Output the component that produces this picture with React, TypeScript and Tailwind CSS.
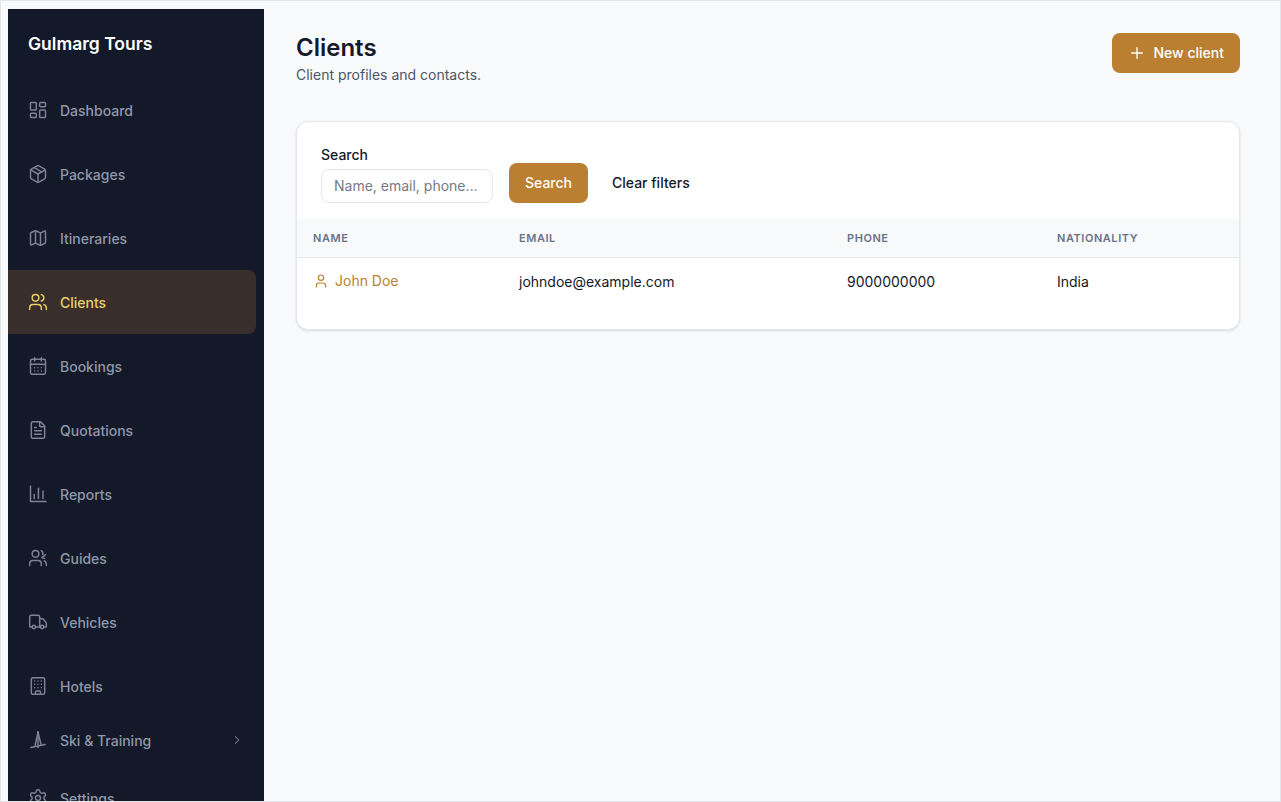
import {
  Building,
  CalendarDays,
  ChevronRight,
  LayoutDashboard,
  Map,
  Package,
  Plus,
  Settings,
  Truck,
  User,
  Users,
  FileText,
} from 'lucide-react'
import type { ComponentType } from 'react'

type IconProps = { className?: string; strokeWidth?: number }

interface NavItem {
  label: string
  icon: ComponentType<IconProps>
  active?: boolean
}

function ReportsIcon({ className, strokeWidth }: IconProps) {
  return (
    <svg viewBox="0 0 24 24" fill="none" stroke="currentColor" strokeWidth={strokeWidth} strokeLinecap="round" strokeLinejoin="round" className={className}>
      <path d="M3 2.5V21h18.5" />
      <path d="M7.5 17.5v-5" />
      <path d="M12.5 17.5V5" />
      <path d="M18 17.5V8.5" />
    </svg>
  )
}

function GuidesIcon({ className, strokeWidth }: IconProps) {
  return (
    <svg viewBox="0 0 24 24" fill="none" stroke="currentColor" strokeWidth={strokeWidth} strokeLinecap="round" strokeLinejoin="round" className={className}>
      <circle cx="9" cy="7" r="4" />
      <path d="M16 21v-2a4 4 0 0 0-4-4H6a4 4 0 0 0-4 4v2" />
      <path d="M16 3.1a4 4 0 0 1 1.6 4.6" />
      <path d="M21 8l-4.5 3.5 3.5 1" />
      <path d="M22 21v-2a4 4 0 0 0-2.5-3.7" />
    </svg>
  )
}

function SkiIcon({ className, strokeWidth }: IconProps) {
  return (
    <svg viewBox="0 0 24 24" fill="none" stroke="currentColor" strokeWidth={strokeWidth} strokeLinecap="round" strokeLinejoin="round" className={className}>
      <path d="M12 2.5L8.5 18.5" />
      <path d="M12 2.5l3.5 14.5" />
      <path d="M12 2.5V21" />
      <path d="M3.5 21l17-3.5" />
    </svg>
  )
}

const navItems: NavItem[] = [
  { label: 'Dashboard', icon: LayoutDashboard },
  { label: 'Packages', icon: Package },
  { label: 'Itineraries', icon: Map },
  { label: 'Clients', icon: Users, active: true },
  { label: 'Bookings', icon: CalendarDays },
  { label: 'Quotations', icon: FileText },
  { label: 'Reports', icon: ReportsIcon },
  { label: 'Guides', icon: GuidesIcon },
  { label: 'Vehicles', icon: Truck },
  { label: 'Hotels', icon: Building },
]

export default function App() {
  return (
    <div className="h-[802px] overflow-hidden border border-[#e2e4ea] bg-[#f9fafc] font-['Inter',sans-serif] text-[#14192a]">
      <div className="flex h-full pl-[7px] pt-2">
        {/* Sidebar */}
        <aside className="h-[820px] w-64 shrink-0 bg-[#131929]">
          <div className="px-5 pt-[25px] text-[17.5px] leading-5 font-semibold text-white">Gulmarg Tours</div>
          <nav className="mt-6 pr-2">
            {navItems.map((item) => {
              const Icon = item.icon
              return (
                <div
                  key={item.label}
                  className={
                    item.active
                      ? 'flex h-16 items-center gap-3 rounded-r-lg bg-[#382e2c] pl-5 text-sm font-medium text-[#e8cf66]'
                      : 'flex h-16 items-center gap-3 pl-5 text-sm font-medium text-[#9097a8]'
                  }
                >
                  <Icon className={item.active ? 'size-5 text-[#e8cf66]' : 'size-5 text-[#7c8395]'} strokeWidth={1.75} />
                  <span className="pt-0.5">{item.label}</span>
                </div>
              )
            })}
            <div className="flex h-11 items-center gap-3 pl-5 text-sm font-medium text-[#9097a8]">
              <SkiIcon className="size-5 text-[#7c8395]" strokeWidth={1.75} />
              <span className="flex-1 pt-0.5">Ski &amp; Training</span>
              <ChevronRight className="mr-3 size-3.5 text-[#7c8395]" strokeWidth={1.75} />
            </div>
            <div className="mt-1 flex h-16 items-center gap-3 pl-5 text-sm font-medium text-[#9097a8]">
              <Settings className="size-5 text-[#7c8395]" strokeWidth={1.75} />
              <span className="pt-0.5">Settings</span>
            </div>
          </nav>
        </aside>

        {/* Main */}
        <main className="min-w-0 flex-1 pt-6 pr-10 pl-8">
          <div className="flex items-start justify-between">
            <div>
              <h1 className="text-2xl leading-[30px] font-semibold">Clients</h1>
              <p className="mt-[2px] text-sm leading-5 text-[#4c5567]">Client profiles and contacts.</p>
            </div>
            <button className="flex h-10 items-center gap-2 rounded-lg bg-[#ba7f31] px-4 text-sm font-medium text-white">
              <Plus className="size-[18px]" strokeWidth={1.75} />
              New client
            </button>
          </div>

          <div className="mt-[36px] overflow-hidden rounded-xl border border-[#e5e7ee] bg-white shadow-sm">
            <div className="flex items-end gap-4 px-6 pt-6 pb-4">
              <div>
                <label className="block text-sm leading-[18px] font-medium">Search</label>
                <input
                  placeholder="Name, email, phone…"
                  className="mt-[5px] h-[34px] w-[172px] rounded-lg border border-[#e5e7ee] px-3 pb-0.5 text-sm text-[#14192a] outline-none placeholder:text-[#737a88]"
                />
              </div>
              <button className="h-10 rounded-lg bg-[#ba7f31] px-4 text-sm font-medium text-white">Search</button>
              <button className="h-10 px-2 text-sm font-medium">Clear filters</button>
            </div>
            <table className="w-full table-fixed border-collapse text-sm">
              <thead>
                <tr className="h-[38px] border-b border-[#e5e7ee] bg-[#f8f9fb] text-left text-[11px] font-semibold tracking-wider text-[#6a7388] uppercase">
                  <th className="w-[206px] pt-[3px] pl-4 font-semibold">Name</th>
                  <th className="w-[328px] pt-[3px] pl-4 font-semibold">Email</th>
                  <th className="w-[210px] pt-[3px] pl-4 font-semibold">Phone</th>
                  <th className="pt-[3px] pl-4 font-semibold">Nationality</th>
                </tr>
              </thead>
              <tbody>
                <tr className="h-[72px] align-top">
                  <td className="pt-[13px] pl-4">
                    <span className="flex items-center gap-1.5 text-[#ba7f31]">
                      <User className="size-4" strokeWidth={1.75} />
                      John Doe
                    </span>
                  </td>
                  <td className="pt-[14px] pl-4">johndoe@example.com</td>
                  <td className="pt-[14px] pl-4">9000000000</td>
                  <td className="pt-[14px] pl-4">India</td>
                </tr>
              </tbody>
            </table>
          </div>
        </main>
      </div>
    </div>
  )
}
